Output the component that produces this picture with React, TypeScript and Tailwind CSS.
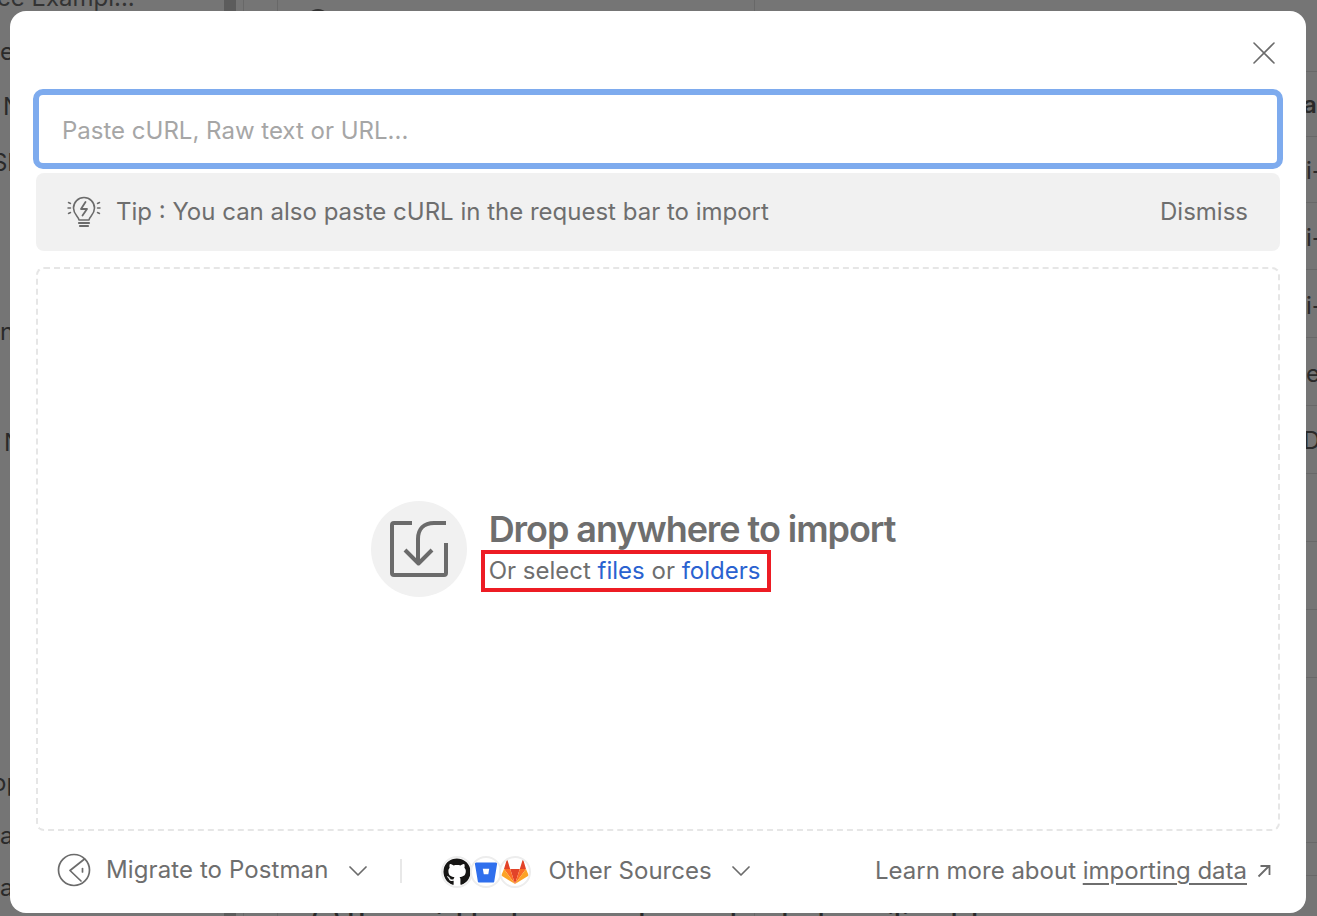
import { FaGithub } from "react-icons/fa";

function Bulb() {
  return (
    <svg width="34" height="34" viewBox="0 0 34 34" fill="none" stroke="#6b6b6b" strokeWidth="1.6" strokeLinecap="round" strokeLinejoin="round">
      <path d="M12 25c0-3.500-5.500-5-5.500-12a10.500 10.500 0 0 1 21 0c0 7-5.500 8.500-5.500 12z" />
      <path d="M18.500 7l-4.500 7h6l-4.500 6.500" strokeWidth="1.800" />
      <path d="M12 28h10M13 31h8" strokeWidth="2.200" />
      <path d="M1 13h2.500M1.500 7.500l2 1M1.500 18.500l2-1M30.500 13H33M32.500 7.500l-2 1M32.500 18.500l-2-1" strokeWidth="1.500" />
    </svg>
  );
}

function ImportGlyph() {
  return (
    <svg width="58" height="58" viewBox="0 0 58 58" fill="none" stroke="#6b6b6b" strokeWidth="4" strokeLinecap="butt" strokeLinejoin="round">
      <path d="M22 3H4a2 2 0 0 0-2 2v48a2 2 0 0 0 2 2h50a2 2 0 0 0 2-2V23" />
      <path d="M56 3H44C34 3 28 9 28 19v24" />
      <path d="M15 30l13.500 13.500L42 30" />
    </svg>
  );
}

function MigrateIcon() {
  return (
    <svg width="34" height="34" viewBox="0 0 34 34" fill="none" stroke="#6b6b6b" strokeWidth="1.700" strokeLinecap="round" strokeLinejoin="round">
      <circle cx="17" cy="17" r="15.500" />
      <path d="M27.500 6L13 17.500l11 10.500" />
      <path d="M25.500 15.500v3.500" />
    </svg>
  );
}

function Chevron({ className }: { className?: string }) {
  return (
    <svg width="18" height="10" viewBox="0 0 18 10" fill="none" stroke="#6b6b6b" strokeWidth="1.700" strokeLinecap="round" strokeLinejoin="round" className={className}>
      <path d="M1 1l8 8 8-8" />
    </svg>
  );
}

function Bitbucket() {
  return (
    <svg width="24" height="24" viewBox="0 0 24 24">
      <path fill="#2f6fed" d="M1.500 2.500h21a.7.700 0 0 1 .7.800l-3 18.500a.8.800 0 0 1-.8.700H4.800a.9.900 0 0 1-.9-.8L.8 3.300a.7.700 0 0 1 .7-.8z" />
      <path fill="#ffffff" d="M8.800 8.800h6.400l-.9 5.400H9.800z" />
    </svg>
  );
}

function Gitlab() {
  return (
    <svg width="28" height="26" viewBox="0 0 28 26">
      <path fill="#e24329" d="M14 25L9.200 10h9.600z" />
      <path fill="#fc6d26" d="M14 25L3 10h6.200z" />
      <path fill="#fca326" d="M3 10L.6 15.800c-.2.500 0 1 .4 1.300L14 25z" />
      <path fill="#e24329" d="M3 10h6.200L6.500 1.300c-.1-.4-.7-.4-.9 0z" />
      <path fill="#fc6d26" d="M14 25l4.800-15H25z" />
      <path fill="#fca326" d="M25 10l2.400 5.800c.2.500 0 1-.4 1.300L14 25z" />
      <path fill="#e24329" d="M25 10h-6.200l2.700-8.700c.1-.4.700-.4.900 0z" />
    </svg>
  );
}

function LogoCircle({ children, className }: { children: React.ReactNode; className?: string }) {
  return (
    <div className={"w-[32px] h-[32px] rounded-full bg-white border-2 border-[#ededed] flex items-center justify-center overflow-hidden " + (className ?? "")}>
      {children}
    </div>
  );
}

function Backdrop() {
  return (
    <div className="absolute inset-0 flex overflow-hidden text-[24px] leading-[28px] text-[#2a2a2a]">
      <div className="w-[224px] flex flex-col shrink-0 whitespace-nowrap">
        <div className="-mt-[16px] -ml-[3px] text-[#333]">ce Exampl...</div>
        <div className="mt-[26px]">e</div>
        <div className="mt-[27px] pl-[3px]">N</div>
        <div className="mt-[28px] -ml-[8px]">Sl</div>
        <div className="mt-[141px]">n</div>
        <div className="mt-[83px] pl-[4px]">N</div>
        <div className="mt-[312px] -ml-[8px]">op</div>
        <div className="mt-[25px]">a</div>
        <div className="mt-[24px]">a</div>
      </div>
      <div className="w-[12px] bg-[#5c5c5c] shrink-0" />
      <div className="w-[7px] shrink-0" />
      <div className="w-[34px] border-l border-[#686868] shrink-0" />
      <div className="w-[478px] border-x border-[#686868] shrink-0 pl-[28px]">
        <div className="w-[24px] h-[24px] rounded-full border-2 border-[#333] mt-[9px]" />
      </div>
      <div className="flex-1" />
      <div className="w-[11px] shrink-0 flex flex-col">
        <div className="h-[72px] border-b border-[#686868]" />
        <div className="h-[65px] border-b border-[#686868] font-semibold pt-[19px] -ml-[3px] whitespace-nowrap">al</div>
        <div className="h-[66px] border-b border-[#686868] pt-[20px] whitespace-nowrap">i-</div>
        <div className="h-[67px] border-b border-[#686868] pt-[21px] whitespace-nowrap">i-</div>
        <div className="h-[68px] border-b border-[#686868] pt-[22px] whitespace-nowrap">i-</div>
        <div className="h-[68px] border-b border-[#686868] pt-[22px] whitespace-nowrap">e</div>
        <div className="h-[68px] border-b border-[#686868] pt-[21px] -ml-[3px] whitespace-nowrap">D</div>
        <div className="h-[68px] border-b border-[#686868]" />
        <div className="h-[68px] border-b border-[#686868]" />
        <div className="h-[68px] border-b border-[#686868]" />
        <div className="h-[165px] border-b border-[#686868]" />
        <div className="h-[33px] border-b border-[#686868]" />
      </div>
    </div>
  );
}

export default function App() {
  return (
    <div className="relative w-[1317px] h-[916px] overflow-hidden bg-[#757575] font-['Inter',sans-serif]">
      <Backdrop />
      <div className="absolute left-[310px] top-[907px] text-[24px] leading-[28px] font-semibold text-[#2a2a2a] whitespace-nowrap">
        (x) Use variables to reuse values and protect sensitive data
      </div>
      <div className="absolute left-[10px] top-[11px] w-[1296px] h-[902px] bg-white rounded-[16px] px-[26px] flex flex-col">
        <div className="h-[78px] flex items-start justify-end shrink-0">
          <button className="mt-[30px] mr-[4px]">
            <svg width="24" height="24" viewBox="0 0 24 24" fill="none" stroke="#6b6b6b" strokeWidth="1.600" strokeLinecap="round">
              <path d="M2 2l20 20M22 2L2 22" />
            </svg>
          </button>
        </div>
        <div className="-mx-[3px] h-[80px] shrink-0 border-[6px] border-[#7eabee] rounded-[10px] flex items-center">
          <input
            className="w-full h-full bg-transparent outline-none px-[23px] pt-[3px] text-[24px] text-[#444] placeholder:text-[#a6a6a6]"
            placeholder="Paste cURL, Raw text or URL..."
            readOnly
          />
        </div>
        <div className="mt-[4px] h-[78px] shrink-0 bg-[#f1f1f1] rounded-[8px] flex items-center justify-between pl-[31px] pr-[32px] text-[24px] text-[#6e6e6e]">
          <div className="flex items-center gap-[15px]">
            <Bulb />
            <span>Tip : You can also paste cURL in the request bar to import</span>
          </div>
          <span>Dismiss</span>
        </div>
        <div className="mt-[16px] h-[564px] shrink-0 border-2 border-dashed border-[#e6e6e6] rounded-[8px] flex items-center justify-center">
          <div className="flex items-center gap-[22px] -ml-[50px]">
            <div className="w-[96px] h-[96px] rounded-full bg-[#f1f1f1] flex items-center justify-center">
              <ImportGlyph />
            </div>
            <div className="flex flex-col -mt-[4px]">
              <div className="text-[36px] leading-[44px] font-semibold tracking-[-1.05px] text-[#6e6e6e]">Drop anywhere to import</div>
              <div className="relative text-[24px] leading-[32px] mt-[4px] text-[#6e6e6e] w-fit">
                Or select <span className="text-[#2a62d0]">files</span> or <span className="text-[#2a62d0]">folders</span>
                <div className="absolute -left-[8px] -right-[11px] -top-[5px] -bottom-[5px] border-4 border-[#ed1c24]" />
              </div>
            </div>
          </div>
        </div>
        <div className="flex-1 flex items-center text-[24px] text-[#6e6e6e] pl-[21px] pr-[9px] pb-[4px]">
          <MigrateIcon />
          <span className="ml-[15px] tracking-[0.1px]">Migrate to Postman</span>
          <Chevron className="ml-[21px] mt-[2px]" />
          <div className="w-[2px] h-[24px] bg-[#e8e8e8] ml-[33px] mt-[2px]" />
          <div className="flex items-center ml-[39px] mt-[4px]">
            <LogoCircle><FaGithub size={28} color="#161514" /></LogoCircle>
            <LogoCircle className="-ml-[3px]"><Bitbucket /></LogoCircle>
            <LogoCircle className="-ml-[3px]"><Gitlab /></LogoCircle>
          </div>
          <span className="ml-[17px] mt-[2px]">Other Sources</span>
          <Chevron className="ml-[20px] mt-[2px]" />
          <div className="ml-auto flex items-center mt-[2px]">
            <span>Learn more about <span className="underline underline-offset-4">importing data</span></span>
            <svg width="14" height="14" viewBox="0 0 14 14" fill="none" stroke="#6b6b6b" strokeWidth="1.800" className="ml-[10px]">
              <path d="M1.500 12.500L12 2M3.500 2H12.500V11" />
            </svg>
          </div>
        </div>
      </div>
    </div>
  );
}
